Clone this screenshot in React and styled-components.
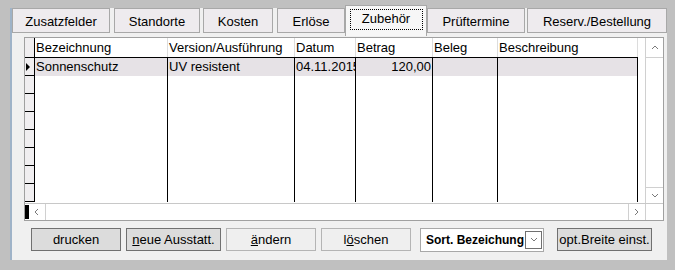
import React from 'react'
import styled, { createGlobalStyle } from 'styled-components'

const GlobalStyle = createGlobalStyle`
  html, body { margin: 0; padding: 0; background: #c0c0c0; }
  body { font-family: "Liberation Sans", Arial, sans-serif; font-size: 13px; color: #000; }
`

const Page = styled.div`
  width: 675px;
  height: 270px;
  padding: 8px 0 0 10px;
  box-sizing: border-box;
`

const Panel = styled.div`
  width: 657px;
  height: 252px;
  box-sizing: border-box;
  border-left: 2px solid #9fb3c8;
  background: #f0f0f0;
  display: flex;
  flex-direction: column;
`

const TabStrip = styled.div`
  display: flex;
  align-items: flex-end;
  height: 25px;
  flex-shrink: 0;
`

const Tab = styled.div`
  box-sizing: border-box;
  width: ${p => p.$w}px;
  margin-left: ${p => p.$ml || 0}px;
  height: ${p => (p.$active ? 31 : 25)}px;
  margin-top: ${p => (p.$active ? -3 : 0)}px;
  margin-bottom: ${p => (p.$active ? -3 : 0)}px;
  align-self: flex-start;
  background: ${p => (p.$active ? '#f7f7f7' : '#eeebee')};
  border: 1px solid #a8a8a8;
  border-bottom: ${p => (p.$active ? 'none' : '1px solid #a8a8a8')};
  display: flex;
  align-items: ${p => (p.$active ? 'flex-start' : 'center')};
  justify-content: center;
  padding-top: ${p => (p.$active ? 3 : 1)}px;
  position: relative;
  z-index: ${p => (p.$active ? 1 : 0)};
`

const Focus = styled.span`
  display: block;
  width: 73px;
  height: 21px;
  box-sizing: border-box;
  border: 1px dotted #000;
  text-align: center;
  line-height: 18px;
`

const Body = styled.div`
  padding: 4px 0 0 12px;
  display: flex;
  flex-direction: column;
`

const Grid = styled.div`
  width: 640px;
  height: 184px;
  box-sizing: border-box;
  border: 1px solid #a0a0a0;
  background: #fff;
  display: flex;
  flex-direction: column;
`

const GridMain = styled.div`
  display: flex;
  height: 165px;
`

const Table = styled.div`
  width: 613px;
  display: flex;
  flex-direction: column;
`

const Row = styled.div`
  display: flex;
  height: ${p => (p.$head ? 20 : 18)}px;
  box-sizing: border-box;
  border-bottom: ${p => (p.$head ? '1px solid #000' : 'none')};
  background: ${p => (p.$sel ? '#e6e2e6' : '#fff')};
`

const Indicator = styled.div`
  width: 10px;
  flex-shrink: 0;
  box-sizing: border-box;
  background: #f0eef0;
  border-right: 1px solid #000;
  border-bottom: ${p => (p.$head ? 'none' : '1px solid #000')};
  display: flex;
  align-items: center;
`

const Arrow = styled.span`
  width: 0;
  height: 0;
  margin-left: 1px;
  border-top: 4px solid transparent;
  border-bottom: 4px solid transparent;
  border-left: 4px solid #000;
`

const Cell = styled.div`
  width: ${p => p.$w}px;
  flex-shrink: 0;
  box-sizing: border-box;
  border-right: 1px solid ${p => (p.$head ? '#dcdcdc' : '#000')};
  padding: 0 1px;
  white-space: nowrap;
  overflow: hidden;
  line-height: ${p => (p.$head ? 19 : 17)}px;
  text-align: ${p => (p.$right ? 'right' : 'left')};
`

const Spacer = styled.div`
  width: 7px;
  flex-shrink: 0;
`

const VScroll = styled.div`
  width: 18px;
  box-sizing: border-box;
  border-left: 1px solid #d0d0d0;
  display: flex;
  flex-direction: column;
  justify-content: space-between;
`

const ScrollBtn = styled.div`
  box-sizing: border-box;
  width: ${p => p.$w || 17}px;
  height: ${p => p.$h || 17}px;
  display: flex;
  align-items: center;
  justify-content: center;
  border-top: ${p => (p.$bt ? '1px solid #d0d0d0' : 'none')};
  border-bottom: ${p => (p.$bb ? '1px solid #d0d0d0' : 'none')};
  border-left: ${p => (p.$bl ? '1px solid #d0d0d0' : 'none')};
  border-right: ${p => (p.$br ? '1px solid #d0d0d0' : 'none')};
`

const HScroll = styled.div`
  height: 17px;
  box-sizing: border-box;
  border-top: 1px solid #c8c8c8;
  display: flex;
`

const BlackBar = styled.div`
  width: 4px;
  height: 14px;
  background: #000;
  margin: 1px 0 0 0;
`

const Track = styled.div`
  flex: 1;
`

const Buttons = styled.div`
  display: flex;
  align-items: flex-start;
  padding: 7px 0 0 7px;
`

const Button = styled.div`
  box-sizing: border-box;
  width: ${p => p.$w}px;
  height: 23px;
  margin-left: ${p => p.$ml || 0}px;
  background: ${p => (p.$dark ? '#dcdcdc' : '#efefef')};
  border: 1px solid ${p => (p.$dark ? '#707070' : '#b4b4b4')};
  display: flex;
  align-items: center;
  justify-content: center;
  padding-bottom: 1px;
  white-space: nowrap;
`

const Select = styled.div`
  box-sizing: border-box;
  width: 124px;
  height: 24px;
  margin-left: 9px;
  background: #fff;
  border: 1px solid #a8a8a8;
  display: flex;
  align-items: center;
  padding-left: 5px;
  font-weight: bold;
  font-size: 12px;
`

const SelectText = styled.span`
  flex: 1;
  white-space: nowrap;
`

const DropBtn = styled.div`
  box-sizing: border-box;
  width: 17px;
  height: 18px;
  margin-right: 1px;
  border: 1px solid #707070;
  display: flex;
  align-items: center;
  justify-content: center;
`

const Chevron = ({ dir }) => {
  const paths = {
    up: 'M1 5 L4 2 L7 5',
    down: 'M1 2 L4 5 L7 2',
    left: 'M5 1 L2 4 L5 7',
    right: 'M2 1 L5 4 L2 7',
  }
  return (
    <svg width="8" height="8" viewBox="0 0 8 8">
      <path d={paths[dir]} fill="none" stroke="#7a7a7a" strokeWidth="1" />
    </svg>
  )
}

const tabs = [
  { label: 'Zusatzfelder', w: 98 },
  { label: 'Standorte', w: 86, ml: 4 },
  { label: 'Kosten', w: 70, ml: 3 },
  { label: 'Erlöse', w: 68, ml: 4 },
  { label: 'Zubehör', w: 82, active: true },
  { label: 'Prüftermine', w: 98 },
  { label: 'Reserv./Bestellung', w: 140, ml: 2 },
]

const cols = [
  { title: 'Bezeichnung', w: 133 },
  { title: 'Version/Ausführung', w: 127 },
  { title: 'Datum', w: 61 },
  { title: 'Betrag', w: 77, right: true },
  { title: 'Beleg', w: 65 },
  { title: 'Beschreibung', w: 140 },
]

const rows = [
  ['Sonnenschutz', 'UV resistent', '04.11.2015', '120,00', '', ''],
  [], [], [], [], [], [], [],
]

export default function App() {
  return (
    <Page>
      <GlobalStyle />
      <Panel>
        <TabStrip>
          {tabs.map(t => (
            <Tab key={t.label} $w={t.w} $ml={t.ml} $active={t.active}>
              {t.active ? <Focus>{t.label}</Focus> : t.label}
            </Tab>
          ))}
        </TabStrip>
        <Body>
          <Grid>
            <GridMain>
              <Table>
                <Row $head>
                  <Indicator $head />
                  {cols.map(c => (
                    <Cell key={c.title} $w={c.w} $head>{c.title}</Cell>
                  ))}
                </Row>
                {rows.map((r, i) => (
                  <Row key={i} $sel={i === 0}>
                    <Indicator>{i === 0 && <Arrow />}</Indicator>
                    {cols.map((c, j) => (
                      <Cell key={j} $w={c.w} $right={c.right}>{r[j] || ''}</Cell>
                    ))}
                  </Row>
                ))}
              </Table>
              <Spacer />
              <VScroll>
                <ScrollBtn $h={20} $bb><Chevron dir="up" /></ScrollBtn>
                <ScrollBtn $h={16} $bt><Chevron dir="down" /></ScrollBtn>
              </VScroll>
            </GridMain>
            <HScroll>
              <BlackBar />
              <ScrollBtn $w={17} $h={16} $br><Chevron dir="left" /></ScrollBtn>
              <Track />
              <ScrollBtn $w={17} $h={16} $bl><Chevron dir="right" /></ScrollBtn>
              <ScrollBtn $w={18} $h={16} $bl />
            </HScroll>
          </Grid>
          <Buttons>
            <Button $w={90} $dark>drucken</Button>
            <Button $w={95} $ml={5} $dark><span><u>n</u>eue Ausstatt.</span></Button>
            <Button $w={90} $ml={5}><span><u>ä</u>ndern</span></Button>
            <Button $w={90} $ml={5}><span>l<u>ö</u>schen</span></Button>
            <Select>
              <SelectText>Sort. Bezeichung</SelectText>
              <DropBtn><Chevron dir="down" /></DropBtn>
            </Select>
            <Button $w={95} $ml={13} $dark>opt.Breite einst.</Button>
          </Buttons>
        </Body>
      </Panel>
    </Page>
  )
}
